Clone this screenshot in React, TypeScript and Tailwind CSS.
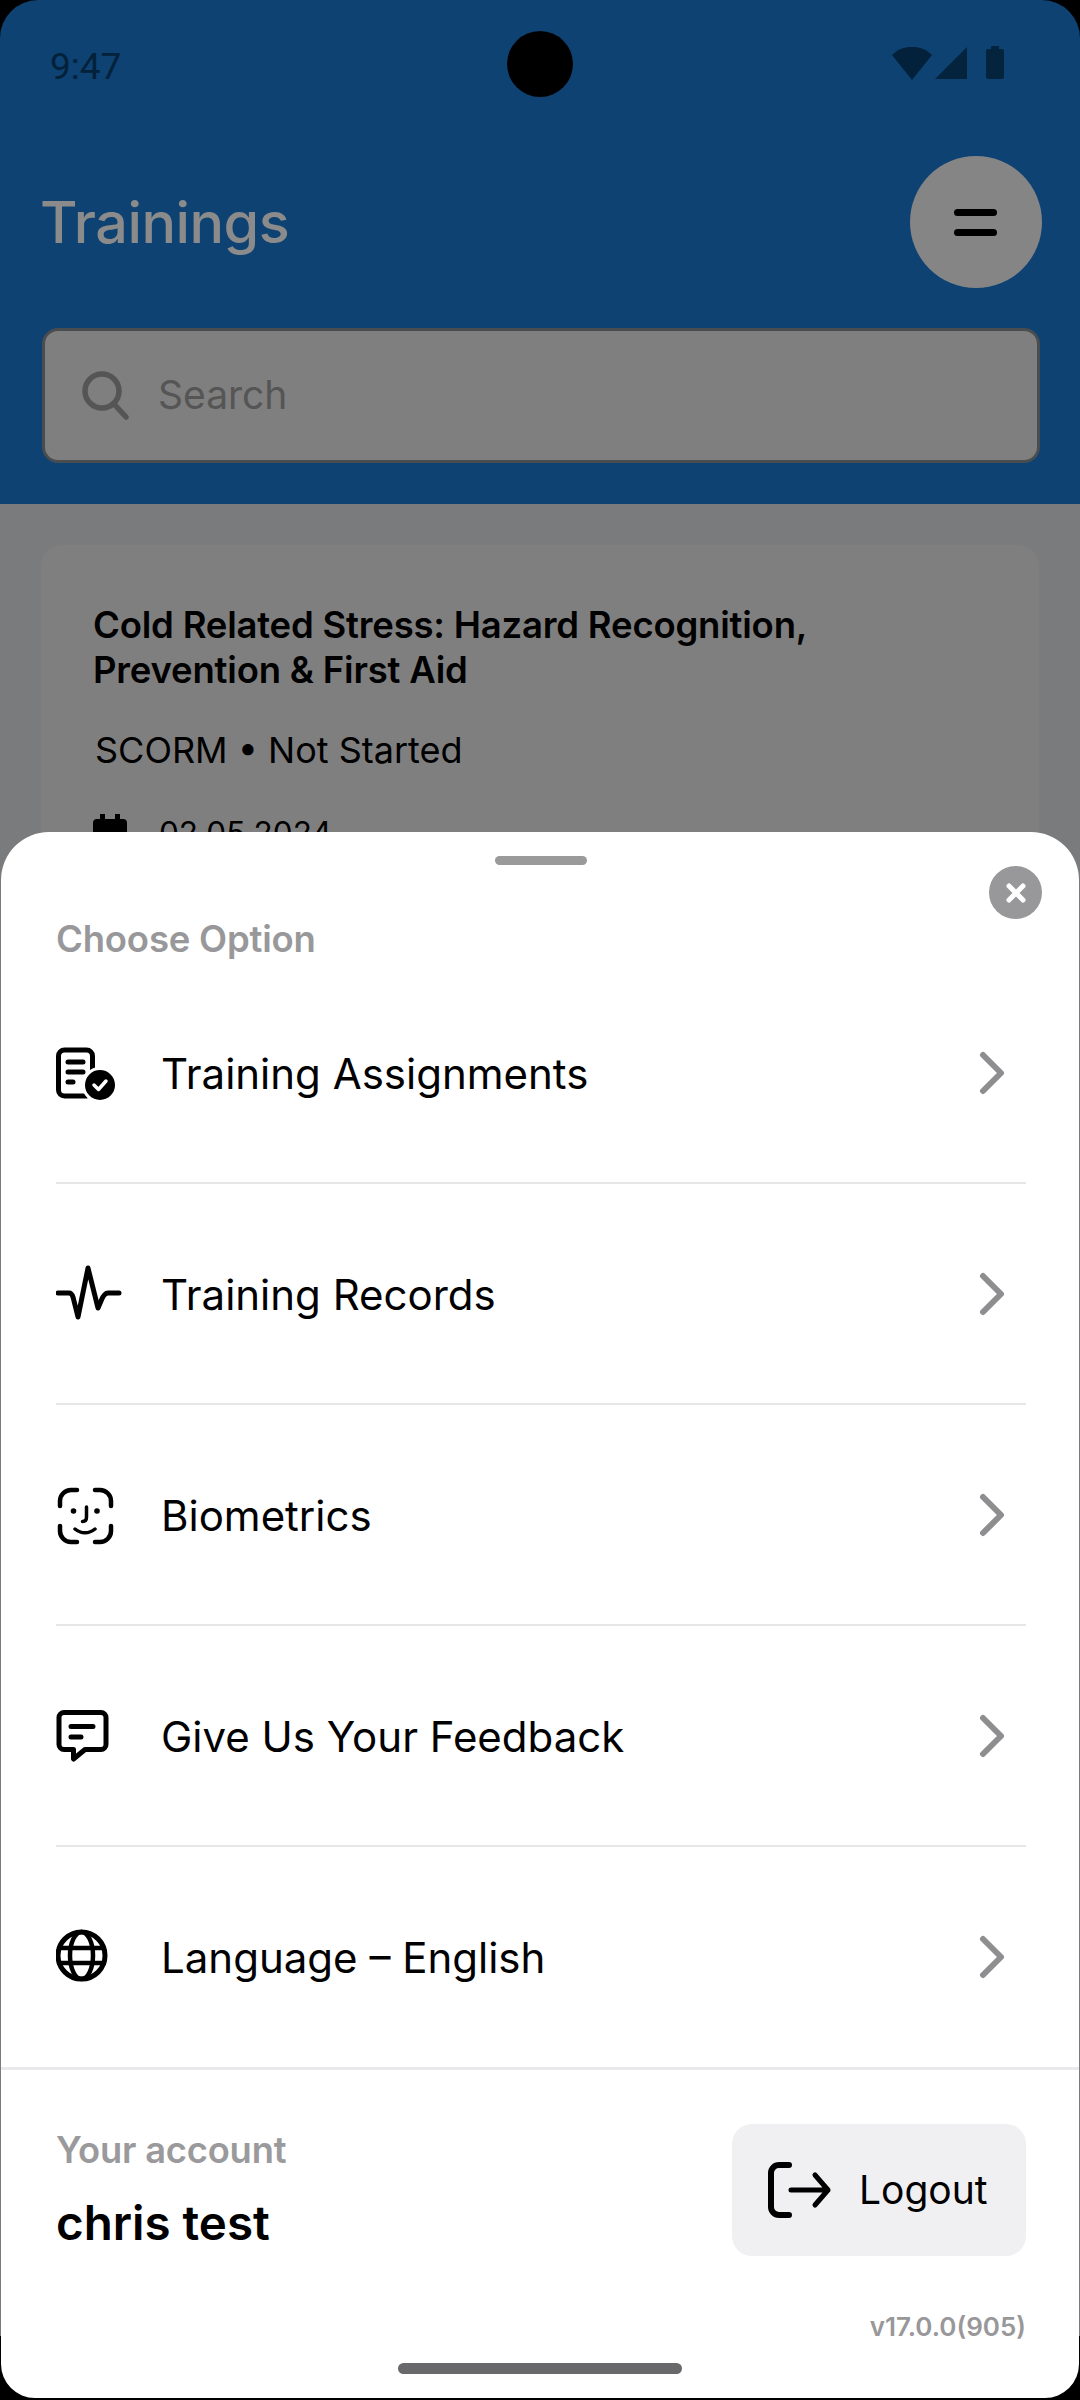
const inter = { fontFamily: 'Inter, "Noto Sans", sans-serif' };

function Chevron() {
  return (
    <svg width="30" height="48" viewBox="0 0 30 48" fill="none" stroke="#8e8e90" strokeWidth="6" strokeLinecap="round" strokeLinejoin="round">
      <path d="M4 6l18 18L4 42" />
    </svg>
  );
}

function Icon({ y, children }: { y: number; children: React.ReactNode }) {
  return (
    <svg width="68" height="68" viewBox={`27 ${y} 68 68`} fill="none" stroke="#000" strokeWidth="5" strokeLinecap="round" strokeLinejoin="round" className="shrink-0">
      {children}
    </svg>
  );
}

const rows = [
  {
    label: 'Training Assignments',
    icon: (
      <Icon y={19}>
        <rect x="29.5" y="30" width="34" height="46" rx="6" />
        <path d="M39 42h15M39 52h15M39 62h5" />
        <circle cx="71" cy="65" r="16.5" fill="#000" stroke="#fff" strokeWidth="3" />
        <path d="M65 65l4.500 4.500L77 61" stroke="#fff" strokeWidth="3.500" />
      </Icon>
    ),
  },
  {
    label: 'Training Records',
    icon: (
      <Icon y={21}>
        <path d="M29 54h11c2 0 3 1 4 4l5 20 10-49 10 40 3-7c2-5 4-8 7-8h11" />
      </Icon>
    ),
  },
  {
    label: 'Biometrics',
    icon: (
      <Icon y={21}>
        <path d="M31 46v-5a11 11 0 0 1 11-11h6M66 30h5a11 11 0 0 1 11 11v5M31 66v5a11 11 0 0 0 11 11h6M66 82h5a11 11 0 0 0 11-11v-5" strokeWidth="4.500" />
        <circle cx="44.500" cy="51" r="2.800" fill="#000" stroke="none" />
        <circle cx="68" cy="51" r="2.800" fill="#000" stroke="none" />
        <path d="M57.500 47v10c0 3-1.500 4.500-4 4.500M46 69c6 5 14 5 20 0" strokeWidth="3.500" />
      </Icon>
    ),
  },
  {
    label: 'Give Us Your Feedback',
    icon: (
      <Icon y={22}>
        <path d="M35 32.500h37a5 5 0 0 1 5 5v27a5 5 0 0 1-5 5H56L44.500 79v-9.500H35a5 5 0 0 1-5-5v-27a5 5 0 0 1 5-5z" />
        <path d="M42 46.500h22M42 57h10" />
      </Icon>
    ),
  },
  {
    label: 'Language – English',
    icon: (
      <Icon y={24}>
        <circle cx="52.500" cy="56.500" r="23.500" />
        <ellipse cx="52.500" cy="56.500" rx="11.500" ry="23.500" strokeWidth="4.500" />
        <path d="M30 49h45M30 64h45" strokeWidth="4.500" />
      </Icon>
    ),
  },
];

export default function App() {
  return (
    <div className="relative w-[1080px] h-[2400px] overflow-hidden bg-black" style={inter}>
      <div className="flex flex-col">
        <header className="h-[504px] bg-[#0e4272] rounded-t-[38px] flex flex-col">
          <div className="relative h-[128px] flex items-center justify-between pl-[50px] pr-[74px]">
            <span className="text-[37px] leading-none text-[#03213a] pt-[4px]" style={{ fontFamily: 'Roboto, sans-serif' }}>9:47</span>
            <div className="absolute left-[507px] top-[31px] w-[66px] h-[66px] rounded-full bg-black" />
            <svg width="114" height="36" viewBox="0 0 114 36" fill="#03213a">
              <path d="M0 9C6 3 12 1 20 1s14 2 20 8L20 34z" />
              <path d="M43 33 75 1v32z" fill="#04233d" />
              <path d="M94 5a2 2 0 0 1 2-2h3V0h8v3h3a2 2 0 0 1 2 2v26a2 2 0 0 1-2 2H96a2 2 0 0 1-2-2z" fill="#04233d" />
            </svg>
          </div>
          <div className="flex items-center justify-between pl-[40px] pr-[38px] h-[160px] mb-[26px] mt-[14px]">
            <h1 className="text-[57.500px] font-medium text-[#8b8b8b] tracking-[-0.5px]">Trainings</h1>
            <div className="w-[132px] h-[132px] rounded-full bg-[#858585] flex flex-col items-center justify-center gap-[13px] pr-[2px]">
              <span className="w-[43px] h-[7px] rounded-full bg-black" />
              <span className="w-[43px] h-[7px] rounded-full bg-black" />
            </div>
          </div>
          <div className="ml-[42px] mr-[40px] h-[135px] rounded-[16px] border-[3px] border-[#4a4d50] bg-[#7f7f7f] flex items-center pl-[36px] gap-[27px]">
            <svg width="50" height="50" viewBox="0 0 50 50" fill="none" stroke="#555" strokeWidth="5.500" strokeLinecap="round">
              <circle cx="21" cy="20" r="17" />
              <path d="M33 33l12 13" />
            </svg>
            <span className="text-[39px] text-[#555]">Search</span>
          </div>
        </header>
        <main className="h-[1832px] bg-[#7a7b7d] px-[41px] pt-[41px]">
          <div className="h-[400px] rounded-[20px] bg-[#7f7f7f] pl-[52px] pt-[58px]">
            <h2 className="text-[36.5px] leading-[45px] font-semibold text-black tracking-[-0.2px]">
              Cold Related Stress: Hazard Recognition,
              <br />
              Prevention &amp; First Aid
            </h2>
            <p className="mt-[35px] text-[36px] leading-[45px] text-black pl-[2px]">SCORM • Not Started</p>
            <div className="flex items-center gap-[32px] mt-[36px]">
              <svg width="34" height="38" viewBox="0 0 34 38" fill="#000">
                <path d="M7 0h5v5h10V0h5v5h3a4 4 0 0 1 4 4v25a4 4 0 0 1-4 4H4a4 4 0 0 1-4-4V9a4 4 0 0 1 4-4h3z" />
              </svg>
              <span className="text-[31.5px] text-black">02.05.2024</span>
            </div>
          </div>
        </main>
      </div>

      <section className="absolute left-[1px] right-[1px] top-[832px] bottom-[2px] bg-white rounded-t-[48px] rounded-b-[34px] flex flex-col">
        <div className="relative h-[131px] shrink-0 pl-[55px]">
          <div className="absolute left-[494px] top-[24px] w-[92px] h-[9px] rounded-full bg-[#9a9a9a]" />
          <div className="absolute left-[988px] top-[34px] w-[53px] h-[53px] rounded-full bg-[#98989a] flex items-center justify-center">
            <svg width="22" height="22" viewBox="0 0 22 22" fill="none" stroke="#fff" strokeWidth="5" strokeLinecap="round">
              <path d="M4 4l14 14M18 4L4 18" />
            </svg>
          </div>
          <p className="pt-[86px] text-[36.5px] leading-[42px] font-semibold text-[#98989a] tracking-[-0.2px]">Choose Option</p>
        </div>
        <ul className="pl-[55px] pr-[53px]">
          {rows.map((r, i) => (
            <li
              key={r.label}
              className={`flex items-center pr-[17px] ${i < 4 ? 'h-[221px] border-b-2 border-[#e6e6e8]' : 'h-[220px]'}`}
            >
              <span className="w-[105px] shrink-0 flex">{r.icon}</span>
              <span className="flex-1 text-[42px] leading-[54px] pt-[2px] text-black">{r.label}</span>
              <Chevron />
            </li>
          ))}
        </ul>
        <footer className="border-t-[3px] border-[#e9e9eb] pl-[55px] pr-[53px] pt-[54px] flex items-start justify-between">
          <div className="pt-[4px]">
            <p className="text-[36.3px] leading-[44px] font-semibold text-[#9a9a9c] tracking-[-0.2px]">Your account</p>
            <p className="mt-[23px] text-[47.5px] leading-[56px] font-semibold text-black">chris test</p>
          </div>
          <button className="w-[294px] h-[132px] rounded-[20px] bg-[#f0f0f2] flex items-center pl-[36px] gap-[27px]">
            <svg width="64" height="56" viewBox="0 0 64 56" fill="none" stroke="#000" strokeWidth="6" strokeLinecap="round" strokeLinejoin="round" className="shrink-0">
              <path d="M21 3H11a8 8 0 0 0-8 8v34a8 8 0 0 0 8 8h10" />
              <path d="M23 28h37M47 13l13 15-13 15" strokeWidth="5" />
            </svg>
            <span className="text-[39px] text-black">Logout</span>
          </button>
        </footer>
        <p className="mt-[55px] pr-[53px] text-right text-[26px] leading-[32px] font-semibold text-[#98989a]">v17.0.0(905)</p>
        <div className="mt-[20px] mx-auto w-[284px] h-[11px] rounded-full bg-[#69696b]" />
      </section>
    </div>
  );
}
